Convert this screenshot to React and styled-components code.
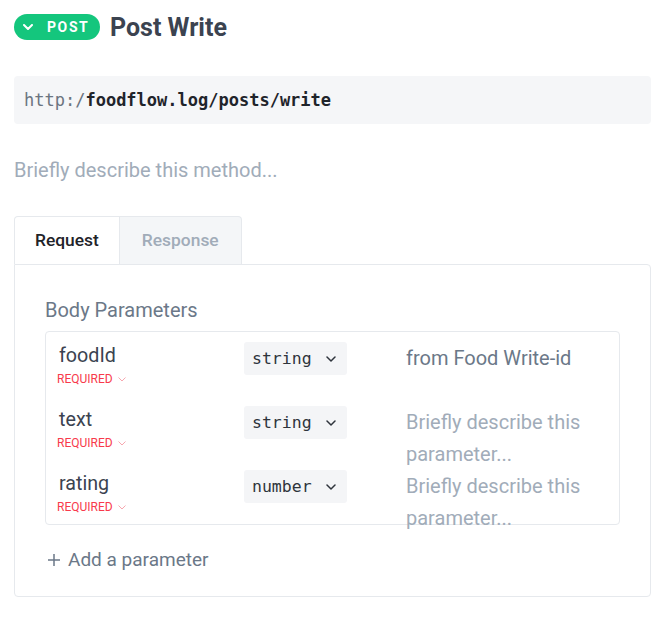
import React from 'react';
import styled, { createGlobalStyle } from 'styled-components';

const GlobalStyle = createGlobalStyle`
  body {
    margin: 0;
    background: #fff;
    font-family: Roboto, "Noto Sans", sans-serif;
  }
`;

const Page = styled.div`
  width: 637px;
  padding: 14px;
`;

const Header = styled.div`
  display: flex;
  align-items: center;
  gap: 10px;
  height: 26px;
`;

const MethodBadge = styled.div`
  display: flex;
  align-items: center;
  gap: 14px;
  width: 86px;
  height: 26px;
  box-sizing: border-box;
  padding-left: 9px;
  border-radius: 13px;
  background: #14c67d;
  color: #fff;
  font-size: 14px;
  font-weight: 700;
  letter-spacing: 1.6px;
`;

const Title = styled.h1`
  margin: 0;
  padding-top: 2px;
  font-size: 25px;
  line-height: 26px;
  font-weight: 700;
  color: #3b4350;
`;

const UrlBox = styled.div`
  margin-top: 36px;
  height: 48px;
  display: flex;
  align-items: center;
  padding: 0 10px;
  border-radius: 4px;
  background: #f5f6f8;
  font-family: "DejaVu Sans Mono", monospace;
  font-size: 17px;
`;

const Host = styled.span`
  color: #6b7480;
`;

const Path = styled.span`
  color: #1f242b;
  font-weight: 700;
`;

const Placeholder = styled.div`
  margin-top: 34px;
  font-size: 20px;
  line-height: 24px;
  color: #a1acb9;
`;

const Tabs = styled.div`
  display: flex;
  margin-top: 34px;
`;

const Tab = styled.div`
  position: relative;
  height: 48px;
  box-sizing: border-box;
  padding: 0 ${p => (p.$active ? '20px' : '22px')} 2px;
  display: flex;
  align-items: center;
  font-size: 17.4px;
  font-weight: 500;
  border: 1px solid #e6e9ed;
  border-bottom: none;
  color: ${p => (p.$active ? '#1f2329' : '#a1acb9')};
  background: ${p => (p.$active ? '#fff' : '#f4f6f8')};
  margin-bottom: ${p => (p.$active ? '-1px' : '0')};
  z-index: ${p => (p.$active ? 1 : 0)};
  border-radius: ${p => (p.$active ? '4px 0 0 0' : '0 4px 0 0')};
  & + & {
    border-left: none;
  }
`;

const Panel = styled.div`
  border: 1px solid #e6e9ed;
  border-radius: 0 4px 4px 4px;
  padding: 33px 30px 24px;
`;

const SectionTitle = styled.div`
  font-size: 20px;
  line-height: 24px;
  color: #6b7888;
`;

const ParamTable = styled.div`
  margin-top: 9px;
  border: 1px solid #e6e9ed;
  border-radius: 4px;
`;

const ParamRow = styled.div`
  display: grid;
  grid-template-columns: 185px 103px 1fr;
  height: 64px;
  box-sizing: border-box;
  padding: 10px 0 0 13px;
`;

const NameCell = styled.div`
  display: flex;
  flex-direction: column;
`;

const ParamName = styled.div`
  font-size: 19.7px;
  line-height: 28px;
  color: #3b4350;
`;

const Required = styled.div`
  margin-top: 2px;
  margin-left: -2px;
  display: flex;
  align-items: center;
  gap: 5px;
  font-size: 12px;
  line-height: 14px;
  color: #f83a4c;
`;

const TypeSelect = styled.div`
  height: 33px;
  display: flex;
  align-items: center;
  justify-content: space-between;
  padding: 0 11px 0 8px;
  border-radius: 3px;
  background: #f4f5f7;
  font-family: "DejaVu Sans Mono", monospace;
  font-size: 16.5px;
  color: #2e343c;
`;

const Description = styled.div`
  font-size: 20px;
  line-height: 32px;
  padding: 0 20px 0 59px;
  color: ${p => (p.$empty ? '#a1acb9' : '#6b7888')};
`;

const AddParam = styled.div`
  margin-top: 23px;
  margin-left: 2px;
  display: flex;
  align-items: center;
  gap: 7px;
  font-size: 19px;
  line-height: 24px;
  color: #6b7888;
`;

const Chevron = ({ size = 10, color = 'currentColor', width = 1.6 }) => (
  <svg width={size} height={size * 0.6} viewBox="0 0 10 6" fill="none">
    <polyline points="1,1 5,5 9,1" stroke={color} strokeWidth={width} strokeLinecap="round" strokeLinejoin="round" />
  </svg>
);

const params = [
  { name: 'foodId', type: 'string', desc: 'from Food Write-id' },
  { name: 'text', type: 'string' },
  { name: 'rating', type: 'number' },
];

export default function App() {
  return (
    <Page>
      <GlobalStyle />
      <Header>
        <MethodBadge>
          <Chevron size={10} color="#fff" width={2} />
          POST
        </MethodBadge>
        <Title>Post Write</Title>
      </Header>

      <UrlBox>
        <Host>http:/</Host>
        <Path>foodflow.log/posts/write</Path>
      </UrlBox>

      <Placeholder>Briefly describe this method...</Placeholder>

      <Tabs>
        <Tab $active>Request</Tab>
        <Tab>Response</Tab>
      </Tabs>
      <Panel>
        <SectionTitle>Body Parameters</SectionTitle>
        <ParamTable>
          {params.map(p => (
            <ParamRow key={p.name}>
              <NameCell>
                <ParamName>{p.name}</ParamName>
                <Required>
                  REQUIRED
                  <Chevron size={8} color="#f7a2aa" width={1.2} />
                </Required>
              </NameCell>
              <TypeSelect>
                {p.type}
                <Chevron size={10} color="#2e343c" width={1.5} />
              </TypeSelect>
              <Description $empty={!p.desc}>
                {p.desc || 'Briefly describe this parameter...'}
              </Description>
            </ParamRow>
          ))}
        </ParamTable>
        <AddParam>
          <svg width="14" height="14" viewBox="0 0 14 14" fill="none">
            <path d="M7 1v12M1 7h12" stroke="#6b7888" strokeWidth="1.5" />
          </svg>
          Add a parameter
        </AddParam>
      </Panel>
    </Page>
  );
}
